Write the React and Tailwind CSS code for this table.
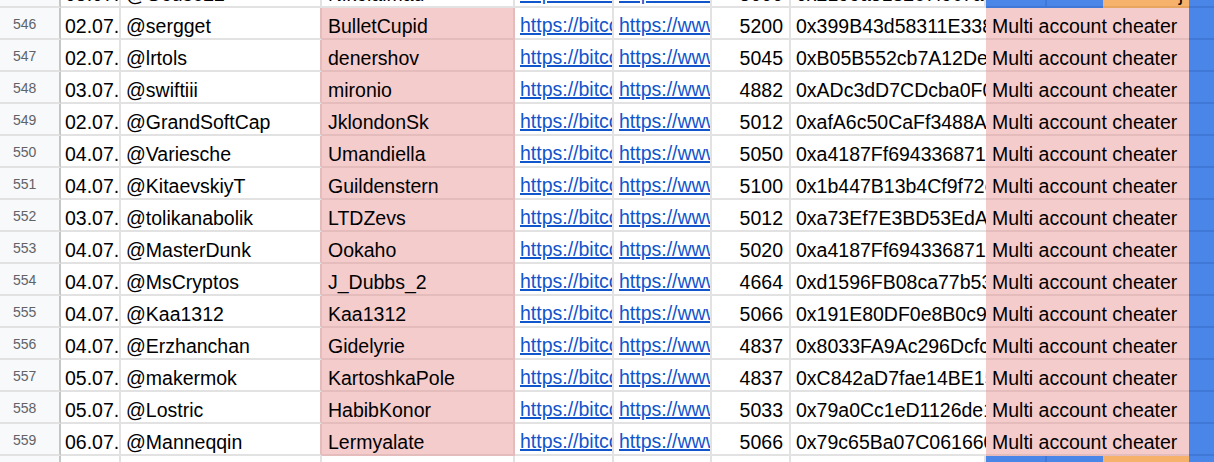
import React from 'react';

const rows = [
  ['546', '02.07.', '@sergget', 'BulletCupid', '5200', '0x399B43d58311E338f2a1'],
  ['547', '02.07.', '@lrtols', 'denershov', '5045', '0xB05B552cb7A12De9a07c'],
  ['548', '03.07.', '@swiftiii', 'mironio', '4882', '0xADc3dD7CDcba0F0e4c12'],
  ['549', '02.07.', '@GrandSoftCap', 'JklondonSk', '5012', '0xafA6c50CaFf3488A1b9e'],
  ['550', '04.07.', '@Variesche', 'Umandiella', '5050', '0xa4187Ff6943368719c0d'],
  ['551', '04.07.', '@KitaevskiyT', 'Guildenstern', '5100', '0x1b447B13b4Cf9f72c3a8'],
  ['552', '03.07.', '@tolikanabolik', 'LTDZevs', '5012', '0xa73Ef7E3BD53EdA5e61f'],
  ['553', '04.07.', '@MasterDunk', 'Ookaho', '5020', '0xa4187Ff6943368719c0d'],
  ['554', '04.07.', '@MsCryptos', 'J_Dubbs_2', '4664', '0xd1596FB08ca77b53e0f4'],
  ['555', '04.07.', '@Kaa1312', 'Kaa1312', '5066', '0x191E80DF0e8B0c9d27a1'],
  ['556', '04.07.', '@Erzhanchan', 'Gidelyrie', '4837', '0x8033FA9Ac296Dcfc0b53'],
  ['557', '05.07.', '@makermok', 'KartoshkaPole', '4837', '0xC842aD7fae14BE15d8e2'],
  ['558', '05.07.', '@Lostric', 'HabibKonor', '5033', '0x79a0Cc1eD1126de1f4a6'],
  ['559', '06.07.', '@Manneqqin', 'Lermyalate', '5066', '0x79c65Ba07C061660a3b7'],
];

// shared cell bits
const cell = 'h-full flex items-end pb-[1px] overflow-hidden whitespace-nowrap shrink-0 border-b-2';
const link = 'text-[#1155cc] underline decoration-2';

//
// one sheet row; variant 'edge' draws the blue/blue/orange strip (top + bottom partial rows)
//
const Row = ({ r, edge, className = '' }) => {
  return (
    <div className={'flex h-[32px] shrink-0 ' + className}>
      <div className={cell + ' w-[61px] bg-[#f8f9fa] border-[#e2e2e2] border-r-2 border-r-[#c4c7c5] pl-[13px] pb-[3px] text-[14px] text-[#5f6368]'}>
        {r[0]}
      </div>
      <div className={cell + ' w-[60px] border-[#e2e2e2] border-r-2 pl-[4px]'}>{r[1]}</div>
      <div className={cell + ' w-[201px] border-[#e2e2e2] border-r-2 pl-[5px] ' + (edge ? '' : 'border-r-[#e3bcbb]')}>{r[2]}</div>
      <div className={cell + ' w-[193px] pl-[6px] border-r-2 ' + (edge ? 'bg-white border-[#e2e2e2]' : 'bg-[#f4cccc] border-[#e3bcbb]')}>
        {r[3]}
      </div>
      <div className={cell + ' w-[99px] border-[#e2e2e2] border-r-2 pl-[5px] pb-[2px]'}>
        <span className={link}>https://bitcointalk.org/index.php</span>
      </div>
      <div className={cell + ' w-[98px] border-[#e2e2e2] border-r-2 pl-[5px] pb-[2px]'}>
        <span className={link}>https://www.youtube.com/</span>
      </div>
      <div className={cell + ' w-[79px] border-[#e2e2e2] border-r-2 justify-end pr-[6px]'}>{r[4]}</div>
      <div className={cell + ' w-[195px] border-[#e2e2e2] pl-[5px] ' + (edge ? 'border-r-2' : '')}>{r[5]}</div>
      {edge ? (
        <>
          <div className={cell + ' w-[61px] bg-[#4a86e8] border-[#3f78d6] border-r-2'} />
          <div className={cell + ' w-[56px] bg-[#4a86e8] border-[#3f78d6]'} />
          <div className={cell + ' w-[86px] bg-[#f6b26b] border-[#e8a560] justify-end pr-[6px]'}>{r[6]}</div>
        </>
      ) : (
        <div className={cell + ' w-[203px] bg-[#f4cccc] border-[#e3bcbb] pl-[6px]'}>Multi account cheater</div>
      )}
      <div className={cell + ' flex-1 bg-[#4a86e8] border-[#3f78d6]'} />
    </div>
  );
};

export default function App() {
  return (
    <div className="w-[1214px] h-[462px] overflow-hidden bg-white flex flex-col font-['Liberation_Sans',Arial,sans-serif] text-[19.5px] leading-[22px] text-black">
      <Row
        edge
        className="-mt-[24px]"
        r={['545', '05.07.', '@Gouse22', 'Nikolaimad', '5000', '0x2199a5182e7f9c7a0', 'j']}
      />
      {rows.map((r) => (
        <Row key={r[0]} r={r} />
      ))}
      <Row edge r={['560', '', '', '', '', '', '']} />
    </div>
  );
}
